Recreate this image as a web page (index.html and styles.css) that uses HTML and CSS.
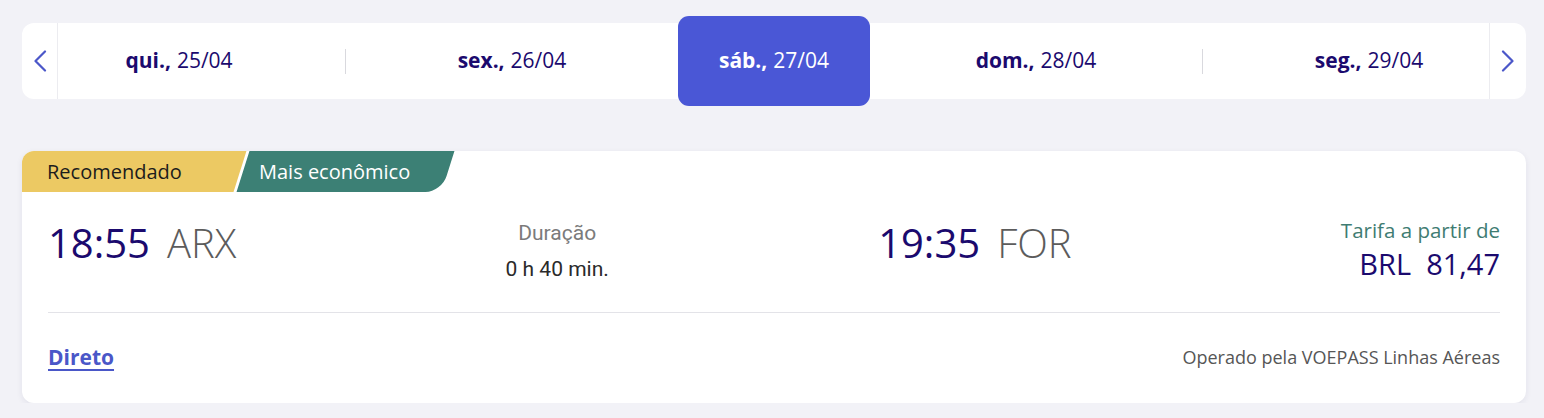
FILE: index.html
```html
<!DOCTYPE html>
<html lang="pt-BR">
<head>
<meta charset="utf-8">
<title>Voos</title>
<link rel="stylesheet" href="styles.css">
</head>
<body>
<div class="datebar">
  <button class="arrow arrow-left" aria-label="Anterior">
    <svg width="14" height="22" viewBox="0 0 14 22"><path d="M12 1.5 L2.5 11 L12 20.5" fill="none" stroke="#4b57c9" stroke-width="2.2" stroke-linecap="round" stroke-linejoin="round"/></svg>
  </button>
  <div class="days">
    <div class="day"><b>qui.,</b> 25/04</div>
    <span class="sep"></span>
    <div class="day"><b>sex.,</b> 26/04</div>
    <span class="sep hidden"></span>
    <div class="day active"><b>sáb.,</b> 27/04</div>
    <span class="sep hidden"></span>
    <div class="day"><b>dom.,</b> 28/04</div>
    <span class="sep"></span>
    <div class="day"><b>seg.,</b> 29/04</div>
  </div>
  <button class="arrow arrow-right" aria-label="Próximo">
    <svg width="14" height="22" viewBox="0 0 14 22"><path d="M2 1.5 L11.5 11 L2 20.5" fill="none" stroke="#4b57c9" stroke-width="2.2" stroke-linecap="round" stroke-linejoin="round"/></svg>
  </button>
</div>

<div class="card">
  <div class="tags">
    <span class="tag tag-rec">Recomendado</span>
    <span class="tag tag-eco">Mais econômico</span>
  </div>
  <div class="main">
    <div class="point"><span class="time">18:55</span><span class="iata">ARX</span></div>
    <div class="duration">
      <div class="dur-label">Duração</div>
      <div class="dur-value">0 h 40 min.</div>
    </div>
    <div class="point"><span class="time">19:35</span><span class="iata">FOR</span></div>
    <div class="price">
      <div class="price-label">Tarifa a partir de</div>
      <div class="price-value">BRL&nbsp;&nbsp;81,47</div>
    </div>
  </div>
  <div class="footer">
    <a class="direct" href="#">Direto</a>
    <span class="operator">Operado pela VOEPASS Linhas Aéreas</span>
  </div>
</div>
</body>
</html>
```

FILE: styles.css
```css
* { box-sizing: border-box; }
html, body { margin: 0; }
body {
  background: #f2f2f7;
  padding: 23px 18px 0 22px;
  font-family: "Open Sans", "Noto Sans", sans-serif;
  color: #1b0a6e;
}

.datebar {
  display: flex;
  align-items: stretch;
  height: 76px;
  background: #fff;
  border-radius: 12px;
}
.arrow {
  flex: 0 0 auto;
  display: flex;
  align-items: center;
  justify-content: center;
  background: none;
  border: 0;
  padding: 0;
  cursor: pointer;
}
.arrow-left { width: 36px; border-right: 1px solid #ececf0; }
.arrow-right { width: 37px; border-left: 1px solid #ececf0; }

.days {
  flex: 1;
  display: flex;
  align-items: center;
  padding: 0 24px 0 25px;
}
.day {
  flex: 0 0 192px;
  height: 90px;
  margin: -7px 0;
  padding-bottom: 2px;
  display: flex;
  align-items: center;
  justify-content: center;
  font-size: 21px;
  color: #1b0a6e;
  border-radius: 11px;
}
.day b { font-weight: 700; margin-right: 6px; }
.day.active { background: #4a57d6; color: #fff; }
.sep {
  flex: 0 0 1px;
  height: 25px;
  margin: 0 70px;
  background: #d9d9de;
}
.sep.hidden { flex-basis: 0; margin: 0 35px; background: none; }

.card {
  margin-top: 52px;
  background: #fff;
  border-radius: 12px;
  overflow: hidden;
  box-shadow: 0 2px 6px rgba(40, 40, 90, 0.08);
  padding: 0 26px 0 26px;
}

.tags {
  display: flex;
  height: 41px;
  margin-left: -26px;
}
.tag {
  position: relative;
  display: flex;
  align-items: center;
  font-size: 20px;
  z-index: 0;
}
.tag::before {
  content: "";
  position: absolute;
  top: 0; bottom: 0; left: 0; right: 0;
  transform: skewX(-17.5deg);
  z-index: -1;
}
.tag-rec {
  width: 218px;
  padding-left: 25px;
  color: #1c1c1c;
}
.tag-rec::before { background: #ecc963; left: -30px; }
.tag-eco {
  margin-left: 3px;
  padding: 0 38px 0 16px;
  color: #fff;
}
.tag-eco::before { background: #3c8075; border-bottom-right-radius: 16px; }

.main {
  display: flex;
  justify-content: space-between;
  align-items: flex-start;
  padding-top: 25px;
  height: 121px;
  border-bottom: 1px solid #e3e3e8;
}
.point {
  display: flex;
  align-items: baseline;
  gap: 17px;
  padding-top: 1px;
}
.time {
  font-size: 40px;
  font-weight: 400;
  color: #1b0a6e;
  line-height: 50px;
}
.iata {
  font-size: 40px;
  font-weight: 300;
  color: #5c5c5c;
  line-height: 50px;
}
.duration {
  text-align: center;
  padding-top: 2px;
  font-family: Roboto, "Noto Sans", sans-serif;
}
.dur-label { font-size: 21px; color: #7b7b7b; line-height: 28px; }
.dur-value { font-size: 21px; color: #2a2a2a; line-height: 28px; margin-top: 8px; }
.price { text-align: right; padding-top: 0; }
.price-label { font-size: 20.5px; color: #3f7c72; line-height: 26px; }
.price-value { font-size: 29px; color: #1b0a6e; line-height: 38px; margin-top: 2px; }

.footer {
  display: flex;
  justify-content: space-between;
  align-items: center;
  height: 90px;
  padding-bottom: 2px;
}
.direct {
  font-size: 21px;
  font-weight: 700;
  color: #4a57c8;
  text-decoration: underline;
  text-underline-offset: 4px;
  text-decoration-thickness: 2px;
}
.operator { font-size: 18px; color: #565656; }
```
